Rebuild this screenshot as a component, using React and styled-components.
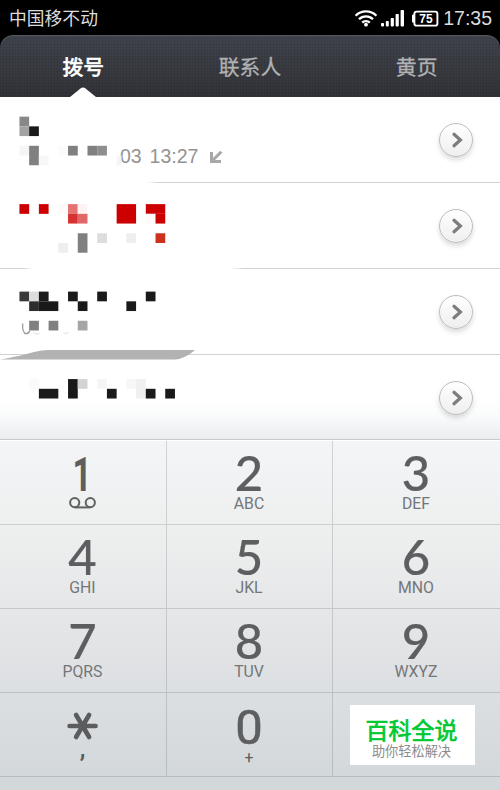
import React from 'react'
import styled, { createGlobalStyle } from 'styled-components'

// width of one mosaic block, the grid starts at the page's top left corner
const BLOCK = 9.72
const HEADER_END = 97
const ROW_HEIGHT = 86

// [column, row, colour, columns wide, rows high]
const calls = [
  {
    date: '03 13:27',
    blocks: [
      [2, 12, '#888'],
      [2, 13, '#a2a2a2'],
      [3, 13, '#1a1a1a'],
      [2, 15, '#f5f5f5'],
      [3, 15, '#808080', 1, 2],
      [4, 16, '#f7f7f7'],
      [6, 15, '#fbfbfb'],
      [7, 15, '#808080'],
      [9, 15, '#808080'],
      [10, 15, '#8e8e8e'],
      [12, 16, '#f5f5f5', 0.5, 1],
    ],
    wipe: [0, 146],
  },
  {
    blocks: [
      [2, 21, '#c00'],
      [4, 21, '#c00'],
      [6, 21, '#fffafa'],
      [7, 21, '#e57373'],
      [8, 21, '#fff2f2'],
      [7, 22, '#d63030'],
      [8, 22, '#e16868'],
      [12, 21, '#c00', 2, 2],
      [15, 21, '#c00', 2, 1],
      [15, 22, '#fffafa'],
      [16, 22, '#c00'],
      [6, 25, '#eee'],
      [8, 24, '#808080', 1, 2],
      [10, 24, '#ddd'],
      [13, 24, '#eee'],
      [16, 24, '#cd301d'],
    ],
    wipe: [32, 230],
  },
  {
    blocks: [
      [2, 30, '#3a3a3a'],
      [3, 30, '#ddd'],
      [4, 30, '#1a1a1a'],
      [3, 31, '#2d2d2d'],
      [4, 31, '#1a1a1a', 2, 1],
      [7, 30, '#1a1a1a'],
      [8, 31, '#1a1a1a'],
      [10, 30, '#1a1a1a'],
      [13, 31, '#1a1a1a'],
      [15, 30, '#1a1a1a'],
      [3, 33, '#808080'],
      [5, 33, '#808080'],
      [8, 33, '#a5a5a5'],
    ],
    smudge: true,
  },
  {
    last: true,
    blocks: [
      [3, 39, '#fafafa'],
      [4, 40, '#1a1a1a', 2, 1],
      [7, 39, '#1a1a1a', 1, 2],
      [8, 39, '#d3d3d3'],
      [10, 39, '#f5f5f5'],
      [11, 40, '#1a1a1a'],
      [13, 39, '#f7f7f7'],
      [14, 39, '#f0f0f0', 1, 2],
      [15, 40, '#1a1a1a'],
      [17, 40, '#1a1a1a'],
    ],
  },
]

const keys = [
  { digit: '1', icon: 'voicemail' },
  { digit: '2', letters: 'ABC' },
  { digit: '3', letters: 'DEF' },
  { digit: '4', letters: 'GHI' },
  { digit: '5', letters: 'JKL' },
  { digit: '6', letters: 'MNO' },
  { digit: '7', letters: 'PQRS' },
  { digit: '8', letters: 'TUV' },
  { digit: '9', letters: 'WXYZ' },
  { icon: 'star' },
  { digit: '0', letters: '+' },
  {},
]

const StatusIcons = () => (
  <svg width="86" height="20" viewBox="352 8 86 20" fill="none">
    <g stroke="#fff" strokeWidth="2.3">
      <path d="M354.6 15.7a14.8 14.8 0 0 1 20.8 0" />
      <path d="M358 19.3a9.8 9.8 0 0 1 14 0" />
      <path d="M361.2 22.6a5.4 5.4 0 0 1 7.6 0" />
    </g>
    <circle cx="365" cy="24.7" r="1.9" fill="#fff" />
    <g fill="#fff">
      <rect x="380" y="23" width="3" height="3.4" rx=".8" />
      <rect x="384.8" y="21" width="3" height="5.4" rx=".8" />
      <rect x="389.7" y="18" width="3.2" height="8.4" rx=".8" />
      <rect x="394.6" y="14" width="3.2" height="12.4" rx=".8" />
      <rect x="399.6" y="10" width="3.4" height="16.4" rx=".8" />
    </g>
    <rect x="413.4" y="11.6" width="23" height="14" rx="2.2" stroke="#fff" strokeWidth="1.9" />
    <path d="M413.4 14.6h-1.2q-1.2 0-1.2 1.2v5.6q0 1.2 1.2 1.2h1.2z" fill="#fff" />
    <text x="425" y="23" textAnchor="middle" fill="#fff" fontFamily="Liberation Sans, sans-serif" fontWeight="700" fontSize="12">
      75
    </text>
  </svg>
)

const Mosaic = ({ index, blocks, smudge }) => {
  const top = HEADER_END + index * ROW_HEIGHT
  return (
    <MosaicCanvas viewBox={`0 ${top} 240 96`}>
      {blocks.map(([col, row, color, w = 1, h = 1]) => (
        <rect
          key={`${col}-${row}`}
          x={col * BLOCK}
          y={row * BLOCK}
          width={w * BLOCK}
          height={h * BLOCK}
          fill={color}
        />
      ))}
      {smudge && (
        <g fill="none" stroke="#999">
          <path d="M22.6 323.5c-.2 6 .8 10 3.6 10.2 2 .1 3-1.3 3.4-3.2" strokeWidth="1.3" />
          <path d="M33.5 332c1.4 2 3.8 2.6 6 1.6M63.5 332.5c1.4 1.5 3.5 1.2 5-.5" stroke="#ddd" />
          <path d="M0 359.6c14-2.6 24-4.6 34-7.6q8-2 14-2h147q-3 3-9 6.2-6 3-11 3.4z" fill="#b2b2b2" stroke="none" />
        </g>
      )}
    </MosaicCanvas>
  )
}

const Voicemail = () => (
  <svg width="28" height="14" viewBox="0 0 28 14" fill="none" stroke="#5f6161" strokeWidth="2">
    <circle cx="5.7" cy="6.6" r="4.6" />
    <circle cx="21.3" cy="6.6" r="4.6" />
    <path d="M5.7 11.4h15.6" />
  </svg>
)

const Star = () => (
  <svg width="32" height="30" viewBox="0 0 32 30" stroke="#5a5c5d" strokeWidth="4.6" strokeLinecap="round">
    <path d="M2.6 15h26M9.1 4l13 22M22.1 4l-13 22" />
  </svg>
)

const Key = ({ digit, letters, icon }) => (
  <KeyCell>
    {icon === 'star' ? (
      <StarKey>
        <Star />
        <Comma>,</Comma>
      </StarKey>
    ) : (
      <>
        {digit === '1' ? <NarrowDigit>1</NarrowDigit> : digit === '0' ? <RoundDigit>0</RoundDigit> : <Digit>{digit}</Digit>}
        <Letters $sign={letters === '+'}>{icon ? <Voicemail /> : letters}</Letters>
      </>
    )}
  </KeyCell>
)

export default () => (
  <Phone>
    <GlobalStyle />
    <StatusBar>
      <Carrier>中国移不动</Carrier>
      <StatusRight>
        <StatusIcons />
        <Clock>17:35</Clock>
      </StatusRight>
    </StatusBar>
    <Tabs>
      <Tab $active>
        拨号
        <Notch viewBox="0 0 26 10">
          <path d="M0 10 10.5 1.4q2.5-2 5 0L26 10z" fill="#fff" />
        </Notch>
      </Tab>
      <Tab>联系人</Tab>
      <Tab>黄页</Tab>
    </Tabs>
    <CallList>
      {calls.map((call, i) => (
        <CallRow key={i} $wipe={call.wipe} $last={call.last}>
          {call.date && (
            <CallDate>
              {call.date}
              <svg width="14" height="14" viewBox="0 0 14 14" fill="none" stroke="#a8a8a8" strokeWidth="3">
                <path d="M12.3 1.7 4 10M2.500 2v9.500H12" />
              </svg>
            </CallDate>
          )}
          <Mosaic index={i} blocks={call.blocks} smudge={call.smudge} />
          <MoreButton>
            <svg width="12" height="18" viewBox="0 0 12 18" fill="none" stroke="#7d7d7d" strokeWidth="3.2" strokeLinecap="round">
              <path d="M3 3.2 9.4 9 3 14.8" />
            </svg>
          </MoreButton>
        </CallRow>
      ))}
    </CallList>
    <Keypad>
      <KeyGrid>
        {keys.map((key, i) => (
          <Key key={i} {...key} />
        ))}
      </KeyGrid>
      <Badge>
        <BadgeTitle>百科全说</BadgeTitle>
        <BadgeText>助你轻松解决</BadgeText>
      </Badge>
    </Keypad>
  </Phone>
)

const GlobalStyle = createGlobalStyle`
  body {
    margin: 0;
    background: #000;
  }
  * {
    box-sizing: border-box;
  }
`

const Phone = styled.div`
  width: 500px;
  height: 790px;
  overflow: hidden;
  background: #000;
  font-family: 'Liberation Sans', 'Noto Sans CJK SC', sans-serif;
`

const StatusBar = styled.div`
  display: flex;
  justify-content: space-between;
  height: 35px;
  padding: 0 8px 0 9px;
  color: #dcdcdc;
`

const Carrier = styled.div`
  font: 400 17.8px/35px 'Noto Sans CJK SC', sans-serif;
`

const StatusRight = styled.div`
  display: flex;
  align-items: center;
  gap: 4px;
`

const Clock = styled.div`
  font-size: 19.5px;
  line-height: 38px;
`

const Tabs = styled.div`
  display: grid;
  grid-template-columns: repeat(3, 1fr);
  height: 62px;
  border-radius: 13px 13px 0 0;
  box-shadow: inset 0 1px 0 #55585d;
  background:
    repeating-linear-gradient(90deg, rgba(0, 0, 0, 0.06) 0 1px, transparent 1px 3px),
    repeating-linear-gradient(rgba(0, 0, 0, 0.06) 0 1px, transparent 1px 3px),
    linear-gradient(#40444c, #323338);
`

const Tab = styled.div`
  position: relative;
  text-align: center;
  font: 400 20.8px/62px 'Noto Sans CJK SC', sans-serif;
  color: ${p => (p.$active ? '#fff' : '#b0b1b3')};
  -webkit-text-stroke: ${p => (p.$active ? '0.7px' : '0.3px')} currentColor;
`

const Notch = styled.svg`
  position: absolute;
  left: 70px;
  bottom: 0;
  width: 26px;
  height: 10px;
`

const CallList = styled.div`
  height: 342px;
  overflow: hidden;
  background: linear-gradient(#fff 88%, #fafbfb 93%, #ecedef);
`

const line = p => {
  if (p.$last) return 'none'
  if (!p.$wipe) return 'linear-gradient(#d2d2d2, #d2d2d2)'
  const [from, to] = p.$wipe
  return `linear-gradient(90deg, #d2d2d2 ${from - 8}px, transparent ${from}px ${to}px, #d2d2d2 ${to + 14}px)`
}

const CallRow = styled.div`
  position: relative;
  display: flex;
  align-items: center;
  justify-content: flex-end;
  height: 86px;
  padding-right: 27px;
  background: ${line} 0 85px / 100% 1px no-repeat;
`

const CallDate = styled.div`
  display: flex;
  align-items: center;
  gap: 11px;
  margin: 33px auto 0 120px;
  font-size: 19.5px;
  word-spacing: 2.5px;
  color: #939393;
`

// blocks are painted over the row's own text
const MosaicCanvas = styled.svg`
  position: absolute;
  left: 0;
  top: 0;
  width: 240px;
  height: 96px;
  z-index: 1;
`

const MoreButton = styled.div`
  display: flex;
  align-items: center;
  justify-content: center;
  width: 34px;
  height: 34px;
  padding-left: 2px;
  border: 1px solid #bdbdbd;
  border-radius: 50%;
  background: linear-gradient(#fff, #efefef);
  box-shadow: 0 3px 5px rgba(0, 0, 0, 0.14);
`

const Keypad = styled.div`
  position: relative;
  height: 351px;
  padding-top: 1px;
  border-top: 1px solid #c9cacd;
  box-shadow: inset 0 1px 0 #fff;
  background: linear-gradient(#f4f5f7, #eeefef 24%, #e6e7e8 48%, #dcdfe2 72%, #d3d8da 96%, #d2d7d9);
`

const KeyGrid = styled.div`
  display: grid;
  grid-template-columns: 167px 166px 167px;
  grid-auto-rows: 84px;
`

const KeyCell = styled.div`
  display: flex;
  flex-direction: column;
  align-items: center;
  padding-right: 1px;
  border: 0 solid rgba(50, 60, 70, 0.18);
  border-bottom-width: 1px;

  &:not(:nth-child(3n)) {
    border-right-width: 1px;
  }
`

const Digit = styled.div`
  height: 55px;
  font: 500 49px/63px Lato, sans-serif;
  color: #5c5e5f;
  -webkit-text-stroke: 0.2px #5c5e5f;
`

const RoundDigit = styled(Digit)`
  font: 400 49px/69px Roboto, sans-serif;
  -webkit-text-stroke: 0.6px #5c5e5f;
`

const NarrowDigit = styled(Digit)`
  font: 700 49px/67px Roboto, sans-serif;
  transform: scaleX(0.68);
  -webkit-text-stroke: 0;
`

const Letters = styled.div`
  height: 15px;
  font: 400 15.8px/${p => (p.$sign ? 19 : 15)}px Roboto, sans-serif;
  color: ${p => (p.$sign ? '#5a5c5d' : '#747678')};
`

const StarKey = styled.div`
  display: flex;
  flex-direction: column;
  align-items: center;
  padding-top: 18px;
`

const Comma = styled.div`
  padding-top: 6px;
  font: 700 23px/6px Roboto, sans-serif;
  color: #5a5c5d;
`

const Badge = styled.div`
  position: absolute;
  left: 350px;
  top: 265px;
  width: 125px;
  height: 60px;
  padding: 9px 2px 0 0;
  background: #fff;
  text-align: center;
  font-family: 'Noto Sans CJK SC', sans-serif;
`

const BadgeTitle = styled.div`
  font-size: 23px;
  line-height: 30px;
  color: #00c832;
  -webkit-text-stroke: 0.7px #00c832;
`

const BadgeText = styled.div`
  font-size: 13.2px;
  line-height: 14px;
  color: #8c8c8c;
`
